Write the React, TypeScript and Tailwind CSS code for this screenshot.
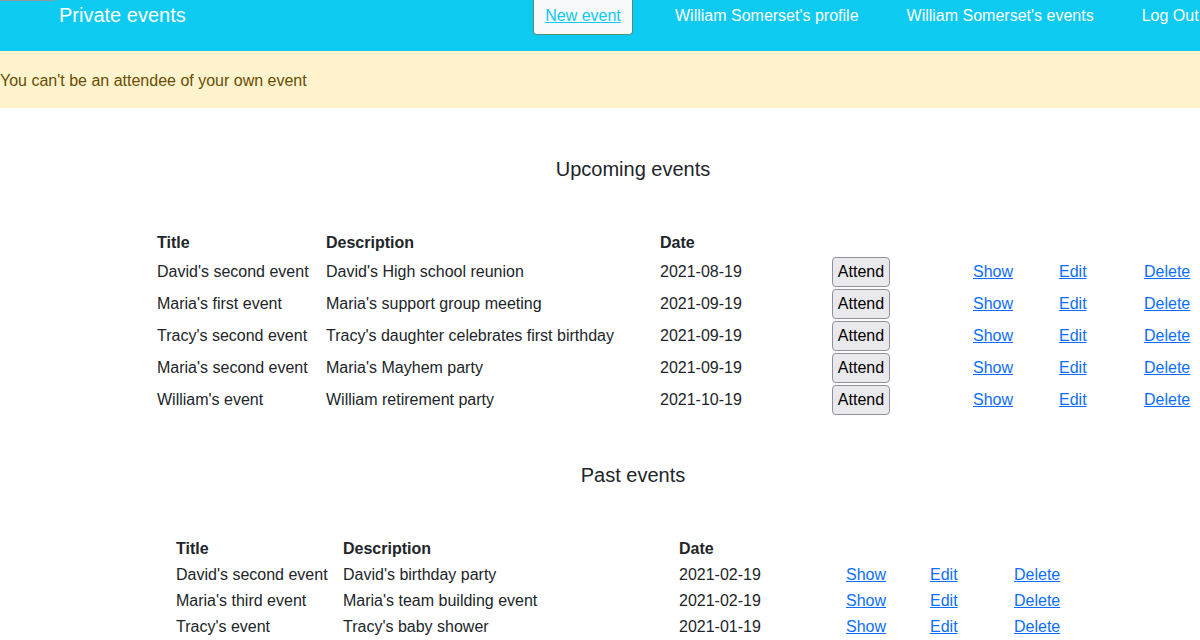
const upcoming = [
  ["David's second event", "David's High school reunion", "2021-08-19"],
  ["Maria's first event", "Maria's support group meeting", "2021-09-19"],
  ["Tracy's second event", "Tracy's daughter celebrates first birthday", "2021-09-19"],
  ["Maria's second event", "Maria's Mayhem party", "2021-09-19"],
  ["William's event", "William retirement party", "2021-10-19"],
];

const past = [
  ["David's second event", "David's birthday party", "2021-02-19"],
  ["Maria's third event", "Maria's team building event", "2021-02-19"],
  ["Tracy's event", "Tracy's baby shower", "2021-01-19"],
];

function Link({ children }: { children: string }) {
  return <a href="#" className="text-[#0d6efd] underline">{children}</a>;
}

export default function App() {
  return (
    <div className="relative min-h-[640px] overflow-hidden bg-white font-['Liberation_Sans',Arial,sans-serif] text-[16px] text-[#212529]">
      <div className="absolute left-0 top-0 h-px w-[55px] bg-[#8a9aa0]" />

      {/* navbar */}
      <nav className="flex h-[51px] items-start bg-[#0dcaf0] text-white">
        <div className="w-[533px] pl-[59px] text-[20px] leading-[31px]">Private events</div>
        <a
          href="#"
          className="h-[35px] w-[100px] rounded-b border-x border-b border-[#4f8f80] bg-[#f8f9fa] text-center leading-[31px] text-[#0dcaf0] underline"
        >
          New event
        </a>
        <a href="#" className="ml-[42px] leading-[31px]">William Somerset's profile</a>
        <a href="#" className="ml-[48px] leading-[31px]">William Somerset's events</a>
        <a href="#" className="ml-[48px] whitespace-nowrap leading-[31px]">Log Out</a>
      </nav>

      {/* flash */}
      <div className="flex h-[57px] items-center bg-[#fff3cd] pt-[2px] text-[#664d03]">
        You can't be an attendee of your own event
      </div>

      {/* upcoming */}
      <h2 className="mt-[49px] pl-[66px] text-center text-[20px] leading-[24px]">Upcoming events</h2>
      <div className="mt-[49px] grid grid-cols-[169px_334px_172px_141px_86px_85px_1fr] pl-[157px]">
        <div className="h-[26px] font-bold leading-[25px]">Title</div>
        <div className="h-[26px] font-bold leading-[25px]">Description</div>
        <div className="h-[26px] font-bold leading-[25px]">Date</div>
        <div />
        <div />
        <div />
        <div />
        {upcoming.map(([t, d, date]) => (
          <div key={t} className="contents">
            <div className="flex h-[32px] items-center whitespace-nowrap">{t}</div>
            <div className="flex h-[32px] items-center whitespace-nowrap">{d}</div>
            <div className="flex h-[32px] items-center">{date}</div>
            <div className="flex h-[32px] items-center">
              <button className="h-[30px] w-[58px] rounded-[4px] border border-[#8f8f9d] bg-[#e9e9ed] text-center text-[16px] text-black">
                Attend
              </button>
            </div>
            <div className="flex h-[32px] items-center"><Link>Show</Link></div>
            <div className="flex h-[32px] items-center"><Link>Edit</Link></div>
            <div className="flex h-[32px] items-center"><Link>Delete</Link></div>
          </div>
        ))}
      </div>

      {/* past */}
      <h2 className="mt-[47px] pl-[66px] text-center text-[20px] leading-[24px]">Past events</h2>
      <div className="mt-[49px] grid grid-cols-[167px_336px_167px_84px_84px_1fr] pl-[176px]">
        <div className="h-[26px] font-bold leading-[25px]">Title</div>
        <div className="h-[26px] font-bold leading-[25px]">Description</div>
        <div className="h-[26px] font-bold leading-[25px]">Date</div>
        <div />
        <div />
        <div />
        {past.map(([t, d, date]) => (
          <div key={t} className="contents">
            <div className="flex h-[26px] items-center whitespace-nowrap">{t}</div>
            <div className="flex h-[26px] items-center whitespace-nowrap">{d}</div>
            <div className="flex h-[26px] items-center">{date}</div>
            <div className="flex h-[26px] items-center"><Link>Show</Link></div>
            <div className="flex h-[26px] items-center"><Link>Edit</Link></div>
            <div className="flex h-[26px] items-center"><Link>Delete</Link></div>
          </div>
        ))}
      </div>
    </div>
  );
}
